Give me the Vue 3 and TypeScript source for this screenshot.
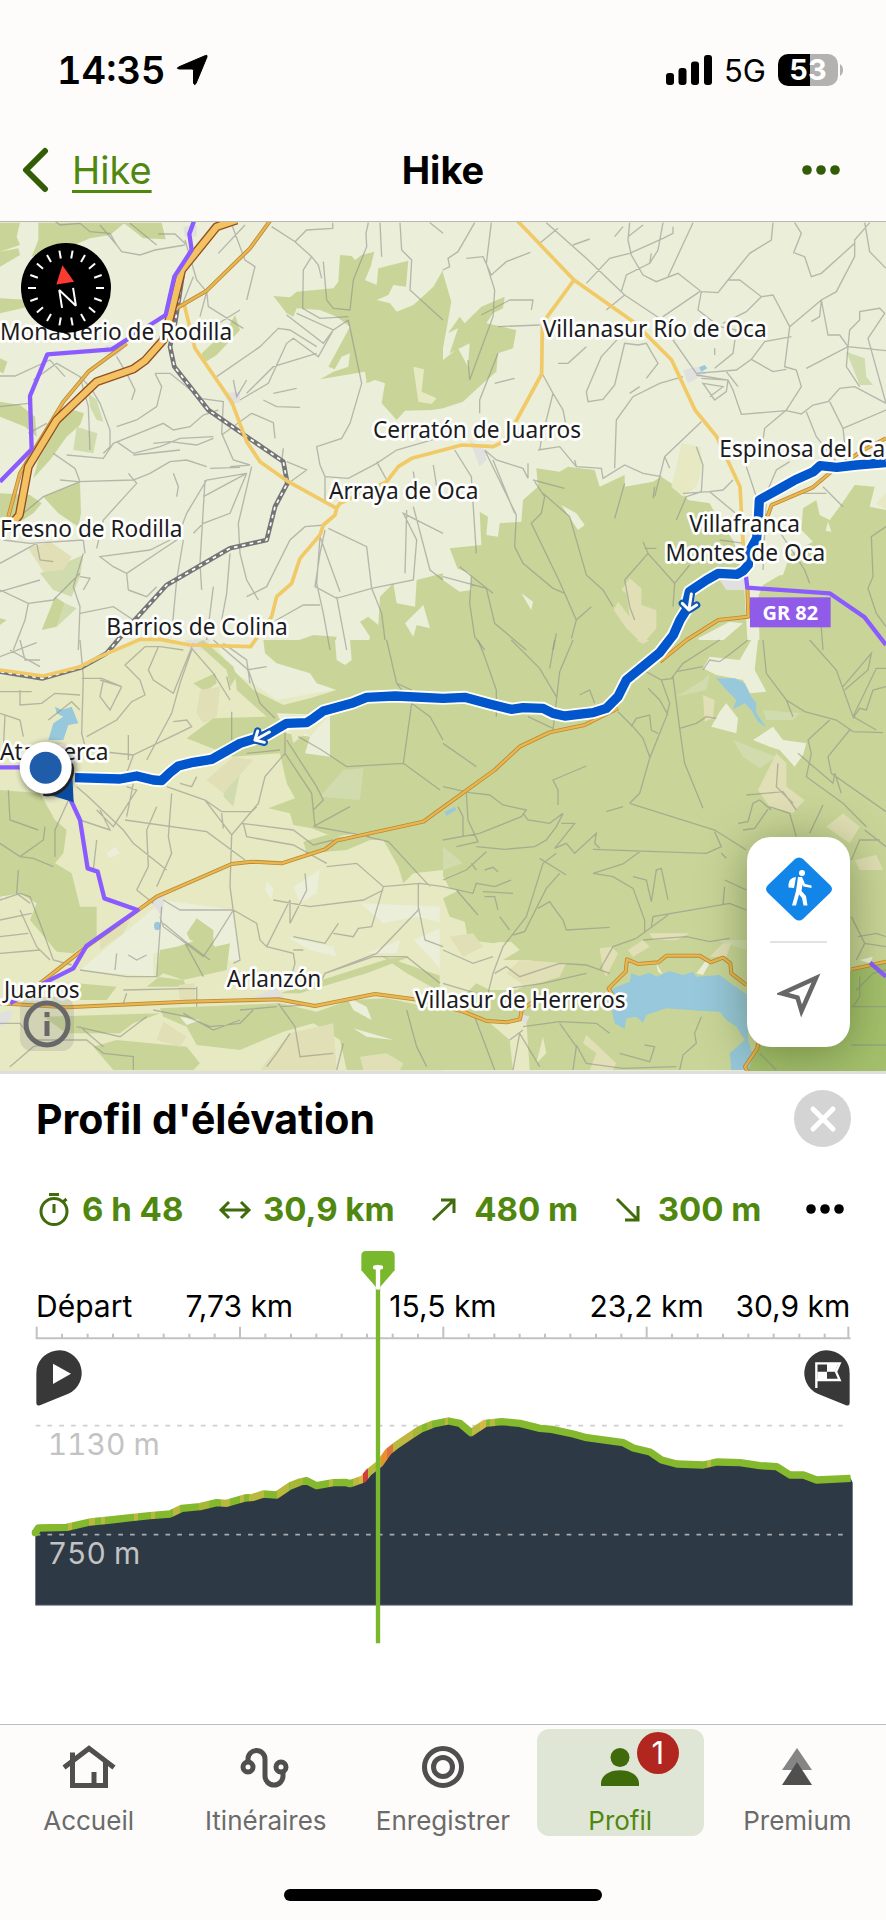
<script setup lang="ts">
import { ref } from 'vue'

interface Tile {
  x: number
  y: number
  light?: string
  cream?: string
  wood: string
  softWood?: string
  clearing?: string
  sand?: string
  urban?: string
  water?: string
  tracks: string
}

const tiles: Tile[] = [
  {
    x: 0,
    y: 0,
    wood:
      'M0 8H60L50 50 60 75 0 95Z M115 8H375L330 45 270 55 235 70 195 90 150 85 95 110 115 60Z M370 8H485L497 58 430 55Z M0 95L55 85 60 105 0 140Z M0 235L90 240 80 262 0 280Z M0 415L22 425 10 460 0 455Z M0 545L60 555 105 590 110 650 75 620 0 590Z M190 560L252 580 240 615 200 650 150 720 100 775 115 720 170 620Z M130 830L240 785 243 880 235 920 175 880Z M0 820L90 825 125 850 100 880 60 905 0 900Z M165 1130L195 1150 170 1220 125 1230Z M705 285L720 330 650 405 610 430 605 400 680 330Z M820 228L870 232 890 215 1000 205 1015 185 1020 105 1055 108 1065 120 1085 105 1123 95 1112 140 1095 180 1130 195 1135 145 1225 122 1218 200 1180 195 1165 225 1130 240 1170 250 1190 275 1240 255 1300 200 1329 150V565L1295 570 1215 572 1190 600 1145 550 1155 490 1125 480 1100 490 1095 455 960 478 1010 450 985 440 1050 320 1010 290 960 270 890 265 880 290 860 280Z M1080 1205L1105 1190 1135 1215 1140 1130 1180 1090 1190 1150 1245 1160 1250 1080 1329 1060V1290H1100L1110 1250Z M870 1270L940 1245 1010 1250 1000 1290H870Z M0 1195L20 1200 0 1215Z',
    softWood:
      'M230 620L292 640 280 700 220 690Z M265 520L290 540 310 605 290 600 270 560Z M120 1060L250 1005 240 1070 215 1130 160 1110Z M195 1150L230 1165 170 1220Z',
    clearing: 'M1215 1210L1270 1155 1290 1225 1250 1215 1240 1250Z M1025 410L1050 400 1045 440 1000 455Z M350 270L400 240 430 100 445 200 440 290 380 320Z',
    cream: 'M1240 440L1272 448 1265 515 1310 535 1295 552 1255 545Z',
    sand: 'M85 985L150 965 215 1010 190 1050 130 1055Z',
    urban: 'M670 520L720 515 720 545 690 555Z M320 375L375 380 350 410 310 400Z M555 1260L630 1258 620 1290H570Z M550 20L590 15 590 50 555 50Z',
    tracks:
      'M160 0L180 15 240 10 270 35 330 40 350 75 365 95 420 105 465 90 555 75 M300 15L350 75 M475 42H525L560 75 M390 10L470 75 M690 0L705 40 720 80 735 120 765 140 740 240 M655 100L735 15 M815 20L885 65 935 110 955 135 965 175 M885 65L920 30 998 25V8 M935 110L910 150 908 265 960 295 1045 290 M970 125L980 240 1000 265 1050 270 1060 180 1100 80 1098 40 1105 8 M1045 300L1085 490 1050 610 1025 655 950 680 960 735 975 770 1045 775 1130 730 1190 690 1329 650 M1140 8L1145 110 M1200 8L1205 90 1235 120 1230 210 1329 300 M1290 8L1329 40 M555 60L590 180 620 215 625 260 730 325 M580 170L550 245 M620 215L600 290 M590 330L640 320 720 270 M650 470L780 380 835 325 870 330 950 380 M950 400L820 440 740 520 M860 285L970 370 1000 330 890 280 M720 540L805 490 860 370 880 355 955 410 1000 330 1045 300 M790 540L830 560 900 562 M820 520L890 505 M755 580L820 608 825 655 M755 580L665 645 M700 480L710 530 740 480 M0 468H45L150 420 195 470 M100 480L170 430 240 470 270 500 M270 500L300 550 330 630V680L310 700 M240 470L265 560 270 690 M350 410L385 470 405 510 395 540 M465 460H510L560 500 600 535 670 545 665 640 700 720 750 735 690 740 M465 460L485 500 470 560 410 600 350 620 M0 560L85 550 M110 490L130 430 M140 610L85 640 M415 640L490 610 520 630 570 620 610 585 655 570 M415 640L340 670 310 715 200 705 M350 665L400 700 480 680 540 655 640 650 M460 670L510 665 590 675 640 655 M400 705L540 690 M620 740L560 720 510 725 450 760 400 780 235 785 M630 745L720 742 M385 760L410 790 310 900 290 985 M240 785L130 830 70 880 M180 780L235 785 M160 700L225 745 240 785 M520 760L535 800 530 830 M610 830L740 760 620 780 560 880 530 960 485 990 380 1060 M740 760L690 880 610 910 580 940 M755 740L715 910 720 1000 740 1080 775 1140 M615 780L600 1030 605 1110 M690 1000L680 1120 665 1200 M740 1130L800 1100 870 960 915 920 975 915 M550 960L530 1080 515 1240 M510 960L450 990 300 1010 340 1040 380 1060 385 1110 M640 1100L620 1260 M10 960L90 970 250 960 255 1000 M0 1030L110 970 120 1020 160 1025 M250 1000L220 1100 240 1160 235 1290 M0 1115L120 1080 M0 1110L85 1150 75 1200 40 1290 M85 1150L160 1140 240 1060 M240 1180L340 1160 400 1200 M240 1070L270 1075 250 1110 M385 1110L440 1130 470 1100 M860 725L920 750 865 790 M850 685L845 725 M960 950L1020 1115 M975 930L960 1000 945 1100 1010 1135 1115 1105 1240 1080 1250 960 1210 880 1329 940 M985 925L1100 980 1115 1105 1145 1180 1155 1260 M960 950L950 1090 970 1180 990 1290 M1220 870L1215 1060 M1240 860L1290 1050 1329 1080 M1130 725L1160 780 M975 770V850 M1240 755L1250 820 M1300 735L1310 800 M770 1250L830 1200 910 1155 960 1155 M1010 1130L1040 1290'
  },
  {
    x: 1329,
    y: 0,
    wood:
      'M0 160L25 245 10 330 0 385Z M185 230L180 265 150 280 130 310 220 330 210 385 165 400 160 455 120 490 60 545 0 565V420L45 385 75 440 80 370 20 400 45 325 15 340 50 290 65 310 115 260Z M280 745L350 755 375 740 455 750 470 800 545 765 545 800 630 785 655 770 715 810 735 840 800 850 830 905 870 960 915 1075 920 1190 960 1095 1020 1060 1045 1000 1110 965 1075 930 1080 865 1120 840 1130 885 1160 900 1190 860 1235 795 1295 800 1280 860 1329 870V1290H0V1030L80 1110 85 1070 45 1050 20 985 115 975 110 875 135 890 130 945 165 950 170 910 235 905 240 840 285 800Z',
    softWood: 'M1210 395L1265 415 1270 470 1290 495 1250 495Z',
    clearing:
      'M355 855L400 880 425 915 405 930Z M235 1120L270 1145 265 1170Z M765 1255L860 1205 900 1210 830 1270 780 1275Z M900 1040L945 1050 950 1290 915 1290Z M1155 905L1165 935 1148 932Z M940 1050L1010 1020 1030 1035 1020 1065 950 1070Z M0 1030L80 1060 85 1110 50 1115 0 1080Z',
    cream: 'M715 670L770 680 780 735 760 800 720 830 685 800 700 740Z M1300 850L1329 820V870Z',
    sand: 'M560 1075L595 1105 595 1155 640 1170 640 1225 600 1272 550 1225 512 1170 525 1145 560 1190 550 1120 535 1110Z',
    urban: 'M720 450L765 440 790 460 735 490Z M80 660L125 690 130 720 110 740Z M830 1080L905 1070 915 1110 850 1110Z',
    water: 'M768 442L785 435 793 445 775 455Z',
    tracks:
      'M95 8L45 95 15 115 20 140 0 150 M145 8L130 130 155 210 150 290 80 480 75 420 M70 115L120 110 145 165 190 125 262 97 M345 25L290 70 M310 8L430 115 545 225 680 315 M390 75L440 57 M430 190L500 115 560 100 660 55 690 40 V20 M555 60L565 105 600 165 640 185 705 160 775 215 825 218 855 180 920 100 985 60 990 8 M555 60L560 8 M515 50L540 20 M555 50L600 15 M625 100L620 130 550 165 535 215 M675 170L750 8 M660 8L645 90 620 130 M545 225L490 270 M775 215L765 270 830 320 880 330 M660 290L770 215 M855 180H890L955 230 990 225 1040 320 1025 440 1060 450 1075 500 1030 570 965 625 960 660 M840 310L910 275 955 230 M1055 8L1075 40 1052 98 1085 110 1105 170 1135 160 1235 70 M1040 320L1135 240 1180 215 1235 110V60L1280 8 M1135 240L1155 345H1190L1215 380 1329 392 M1135 240L1130 290 1105 305 M1265 8L1280 95 1329 145 M1215 380L1220 330 1250 300V275L1310 265 1325 280 1275 355 1329 550 M1090 445L1215 380 1210 440 1250 500 M430 515L475 410 540 340 M430 515L435 545 480 538 515 495 545 370 585 375 610 370 645 430 610 475 M345 430H375L430 380 M200 240H270L265 270 M115 285L200 240 M165 320L290 315 M155 490L215 475 M165 400L110 540V580 M300 465L330 520 295 660 290 690 M330 520L360 570 370 620 M560 520L590 500 M720 470L650 490 570 530 520 600 515 745 M690 360L760 460 880 450 925 418 965 365 1045 350 M925 418L990 455 1030 448 M815 445L870 400 880 330 M850 455L885 500 M815 385V405 M775 475L855 480 850 515 815 540 780 490 840 500 800 530 M760 465L855 480 870 510 895 583 1030 572 1075 582 1110 555 1155 545 1190 505 1235 500 1329 550 M285 690L350 680 400 740 475 745 480 775 545 735 600 760 655 770 M395 720L400 740 M125 690L160 720 240 745 255 775V730 M35 690L85 770 100 1000 M125 690L220 885 215 980 240 1030 330 1105 365 1120 400 1200 M150 720L215 880 M270 780L365 805 M275 785L305 830 295 880 265 910 345 1075 M300 820L380 890 430 1065 480 1110 510 1160 M545 790L515 895 M635 800L630 835 M665 710L635 830 M775 605L665 710 680 745 M760 680L780 735 775 815 730 830 700 900 M800 815L840 810 870 780 M720 820L800 815 890 890 M910 740L950 860 M960 1050L970 820 1000 750 1040 725 M1140 800L1200 860 M1070 820H1150 M600 965L615 1000 545 1080 M605 985H640 M615 1000L695 1090 690 1160 M695 1090L740 1035 M545 1080L560 1160 575 1200 M0 1070L130 1105 155 1210 250 1290 M50 1040L150 1120 M85 1070L80 1150 95 1250 125 1290 M345 1075L400 1200 385 1255 M445 1160L400 1200 M340 1240L330 1290 M1329 920L1285 950 1290 1070 1275 1105 1300 1180 1329 1220 M1000 920L1085 1050 1100 1090 M1130 1160L1140 1290 M830 960L905 970 M1090 575L1120 650 1200 750 M1160 545L1200 625 1205 670 M1200 625L1329 570'
  },
  {
    x: 0,
    y: 1260,
    light:
      'M0 0H420L300 60 130 110 0 90Z M640 0H760L820 30 930 100 1000 150 830 180 760 130 700 100Z M320 640L345 620 360 640 330 655Z M360 890L490 780 700 810 722 960 640 965 600 930 460 940 460 1010 240 990 300 940Z M800 725L820 745 815 780 795 750Z M880 740L960 690 950 760 900 790Z M1080 790L1329 800V850L1250 830 1150 850Z M860 890L1000 920 1010 950 930 930Z M1240 900L1329 860V1000L1290 950Z M1100 940L1200 900 1190 940Z M0 745L25 660 30 720 10 790Z',
    wood:
      'M790 0H1329V510L1270 545 1110 575 1000 590 935 565 880 555 870 520 805 505 885 475 860 430 840 340 700 350 560 295 640 235 800 230 710 150 705 95 760 150 850 195 930 175 1010 150 950 130 930 100 830 70 795 40Z M580 130L645 100 650 130 615 155Z M590 10L610 0 700 80 710 110 690 140 680 90Z M0 450L120 460 165 540 200 570 190 640 165 670 215 700 240 800 290 800 290 890 220 940 170 935 90 840 110 790 60 760 0 770Z M480 930L530 920 620 890 645 920 690 910 680 990 550 1020 470 1010Z M560 880L590 835 640 870 640 920 570 900Z M910 605L980 585 1110 600 1040 630 920 640Z M1010 600L1200 545 1329 500V690L1240 700 1210 730 1195 680 1150 600Z M480 1105L840 1090 950 1115 1050 1080 1160 1075 1329 1110V1290H1040L1020 1200 940 1150 850 1175 720 1230 590 1215 560 1160 490 1130Z M840 1060L1170 955 1230 950 1100 1000 1000 1030 900 1060Z M130 1130L480 1120 400 1150 360 1180 200 1180Z M280 1220L350 1200 560 1220 600 1270 580 1290H340Z M490 1000L440 1040 560 1040 550 1020Z M230 1030L350 1040 320 1080 240 1080Z M1140 945L1329 1010V1060L1220 1000Z',
    softWood: 'M1030 390L1090 385 1080 480 960 470Z M680 420L720 400 700 500 670 470Z',
    clearing: 'M830 220L990 225 990 350 915 340 930 290 860 280Z M1005 0H1050L1055 60 1035 75 1010 60Z M1040 1070L1100 1100 1115 1140 1060 1110Z M1060 1165L1180 1200 1100 1190Z M540 1130L600 1140 560 1155Z',
    cream: 'M860 225L985 228 930 290 915 280 880 310Z M0 860H60L130 960 0 1010Z',
    sand: 'M600 150L660 140 650 230 610 250 590 220Z M620 420L700 350 760 360 670 460Z M535 1035L585 1030V1080H540Z M870 1180L1000 1150 1010 1290 780 1290 820 1240Z M1080 1250L1160 1240 1210 1270 1200 1290H1090Z M490 1145L560 1190 540 1220 470 1200Z M300 890L390 840 370 880 300 930Z',
    urban: 'M450 780L495 765 485 830Z M760 1070L830 1045 860 1085 780 1085Z M0 1120L40 1110 30 1140 0 1160Z',
    water: 'M165 200L185 210 215 200 235 250 205 255 190 300 145 300 160 250 190 230 170 220Z M462 858A9 12 0 1 0 481 858 9 12 0 1 0 462 858Z',
    tracks:
      'M0 50L110 8 M30 30L120 80 M60 0L75 60H120 M240 0L250 110 245 280 258 330 M0 155H95 M60 150V195L125 190 165 160 240 165 M15 225L10 330 M0 220L60 240 70 290 M245 115H305L365 140 300 120 M365 140L330 210 300 170 310 120 M435 20L375 75 420 120 435 165 395 185 350 240 260 290 M475 20L445 90 460 120 520 160 580 10 M435 20H480L550 30 M575 30L540 130 515 220 440 360 M520 245L560 240 575 260 400 345 380 400 M400 345L260 330 M385 285V360 M640 0L745 90 780 190 825 235 M575 25L640 100 690 180 M670 10L740 60 750 130 M680 110L690 150 M695 215V300 M740 90L800 80 M145 240L215 185 240 210 M500 440L615 480 695 585 775 490 795 410 855 340V280 M695 585L690 740 720 960 700 970 M740 340L840 330 M230 440L265 470 370 570 400 610 500 690 M290 510L340 560 410 450 380 440 M300 510L330 570 240 540 M375 540L620 575 735 660 M470 500L440 570 445 680 410 750 M515 460L505 590 515 640 470 740 M400 430L380 530 M615 480L665 515 755 515 770 500 M665 520L670 565 M540 430L575 440 590 410 M725 550L880 570 940 615 1000 600 M730 550L740 590 880 615 980 670 M855 340L935 460 945 560 1110 590 M1040 380L1210 370 1235 190 M1210 370L1320 450 M895 290L965 330 1040 380 M1100 590L1165 605 1290 740 M860 300L950 440 970 480 940 510 M940 560L1050 500 M980 680L1070 670 1150 740 1260 730 1329 740 M915 700L920 750 870 850V780 M820 780L930 800 1090 780 1150 750 M700 810L770 850 780 900 800 920 870 780 M800 920L880 940 885 970 865 1040 M880 930L910 930 M880 890L975 910 1015 850 M1000 880L1060 890 1075 865 1115 860 1150 740 M1255 730V810L1130 940 975 1000 960 1030 M1255 800L1275 900 1329 920 M975 1000L1120 950 1220 950 1320 1030 M1160 0L1190 130 1235 150 M1190 130L1235 190 1290 230 1329 300 M0 610L60 650 100 655 160 680 M60 650L130 600 135 560 M55 690L50 760 90 790 M25 450L30 540 115 570 M165 650V570L210 470 M0 780L60 760 90 770 120 850 160 960 215 975 M60 810L110 920 150 960 M0 840L95 820 M0 890L85 880 M0 940L120 930 M240 990L380 1010 470 1010 485 800 M490 780L540 810 700 810 M480 830L490 860 610 950 650 890 700 810 M550 900L630 960 M490 850L550 900 610 1010 M385 945L410 960 440 945 M350 940L345 990 M370 1050L590 1045 M380 1060L370 1090 M590 1040V1100 M720 1110L830 1100 M835 1090L885 1160 900 1250 1000 1240 M840 1100L1000 1090 M870 1180L830 1240 800 1280 M1030 1210L1010 1290 M1220 1110L1250 1220 1280 1280 M460 1110L560 1130 630 1160 720 1150 760 1110 M230 1160L360 1190 440 1130 M0 1150H60L100 1200 260 1200 310 1240 400 1250V1290 M30 1280L100 1220 150 1210 M240 1160L310 1220 M550 1120L640 1170 720 1140 M290 600L280 690 M410 750L460 790'
  },
  {
    x: 1329,
    y: 1260,
    wood: 'M0 0H1329V1290H0Z',
    softWood: 'M700 170L780 120 800 100 790 150Z M0 620L60 670 0 690Z M870 300L1000 350 950 385 900 350Z M960 210L1070 220 1050 240 970 240Z M820 900H910V930Z',
    clearing:
      'M780 85L800 50 890 60 925 0 945 0 935 90 970 155 920 160 900 120 820 105Z M850 190L885 235 880 280 805 260 830 215Z M930 300L990 260 1020 300 1090 310 1080 345 1055 380 1010 330 980 320Z M150 910L180 905 175 960 140 990 M760 1000L790 960 800 970 780 1005Z M640 970L660 1005 645 995Z M1250 960L1290 950 1280 970Z',
    cream: 'M-10 690L20 745 45 752 0 775 20 830 65 845 75 900 150 910 205 905 230 930 180 960 250 960 330 970 300 1010 220 1050 140 1050 100 1030 40 1090 -10 1100Z M130 1140H250L260 1290H210L200 1200Z M300 1190L310 1240 280 1270Z',
    sand:
      'M230 960L370 970 350 1010 250 1040 190 1000Z M470 925L505 920 525 940 490 1010 480 990Z M780 165L815 180 810 235 785 245Z M1000 340L1030 370 1030 440 1085 480 1050 520 980 500 945 450Z M1150 560L1200 520 1250 560 1220 610Z M1235 660L1300 645 1320 690 1250 690Z M430 1185L520 1270 510 1290H440L460 1240 420 1210Z M555 930L600 900 620 920 570 950Z M620 880L740 880 700 900 630 900Z M800 950L840 910 865 910 850 950Z M20 890L90 880 120 920 60 950Z M580 0H620L600 12Z',
    urban: 'M225 1120L260 1130 245 1155Z',
    water:
      'M565 1000L590 1008 620 998 640 1010 680 993 720 1005 750 995 760 1010 830 1005 870 1035 915 1065V1200L945 1290H865L860 1240 905 1200 880 1160 850 1140 830 1115 770 1112 670 1105 610 1125 600 1148 580 1130 550 1135 545 1167 515 1150 500 1080 510 1045 560 1025Z M820 115L875 115 905 130 925 170 940 190 940 220 970 262 945 245 925 210 905 190 870 208 880 180 850 150Z M5 515L35 500 40 510 10 527Z',
    tracks:
      'M105 0L125 50 160 150V230 M205 0L290 85 340 170 M335 0L320 85 M390 0L350 95 330 270 M410 165L440 150 455 190 M255 230L330 265 M525 215L570 260 600 295 620 350 M565 260L580 235 620 225 625 270 645 280 M615 145L650 180 675 225 M600 90L655 120 690 115 M655 120L680 190 670 230 620 355 590 460 560 490 M690 110L710 265 725 370 780 505 M710 265L760 250 790 230 820 235 M830 0L720 70 685 115 M700 95L780 80 M780 90L800 60 830 65 870 35 915 0 M560 490L815 570 910 630 M815 575L835 620 790 640 450 628 M540 500L490 515 M835 640L850 655 M0 310L100 380 M430 378L330 420 345 450V495 M0 440L80 458 140 465 180 495 250 510 235 530 110 580 0 600 M70 460L75 540 105 605 40 620 M45 500L60 530V590 M240 520L255 540 320 550 360 520 340 560 310 600 275 620 185 628 100 620 M355 550H395L335 625 370 610 395 640 460 580 455 610 470 625 M0 720L70 690 130 635 M85 670L100 690 M125 690L150 682 165 695 M0 740L90 760 100 730 155 740 205 720 M40 750L105 825 M125 770H155L165 810 M170 830L200 870 M120 755L210 760 M290 655L370 705 M340 640L300 670 250 830 180 920 150 1000 135 1060 M350 700L310 745 245 875 210 885 M285 805L320 785 330 800 360 840 370 870 500 862 M450 700L540 672 590 635 M450 700L510 710 570 745 605 840V880 M570 710L610 720 625 785 640 690 655 685 675 780 M625 860L630 830 860 790 910 810 M845 740L840 795 M845 720L910 750 M580 895L675 825 M580 895L510 920 470 990 M600 900L730 890 M730 890L800 905 860 895 M960 0L970 100 1030 180 1085 215 1180 240 1230 275 1320 278 M1030 180L1050 230 M1100 0L1180 90 1230 230 1300 270 M1200 140L1285 40 1275 90 1205 150 M1230 230L1300 85H1329 M1230 235L1250 205 1270 210 1290 150 1329 140 M1220 270L1155 350 1165 400 1329 515 M1160 240L1095 300 1105 340 1090 410 1200 490 1270 560 M1065 340L1170 430 1175 400 1195 460 M910 465L1020 455 1060 510 M1005 370L1000 440 1050 490 M900 570L935 565 980 500 1040 520 1060 590 M885 550L915 545 930 490 950 480 985 510 M1100 580L1140 495 M1225 660L1250 600 1310 600 M1265 570L1329 620 M1225 830L1265 910 1329 920 M1265 910L1240 960 M1245 890L1300 880 1329 890 M1250 1010V1070L1230 1100 M1240 1050L1290 1000 1329 990 M1225 1100H1329 M1225 1215H1329 M950 1240L1000 1290 M0 930L90 970 150 950 M155 1000L190 980 230 1010 350 970 430 975 500 1000 M195 1045L300 1030 430 1000 M0 1030L100 1060 M95 1130L155 1290 M240 1160L350 1145 460 1150 500 1180 M240 1170L200 1200 M230 1180L210 1290 M230 1180L290 1280 M350 1150L400 1220 390 1290 M400 1215L430 1270 540 1285 700 1280 M530 1240L620 1265 635 1220 605 1215 M710 1290L720 1245 760 1210 755 1180 775 1130'
  }
]

interface Place {
  name: string
  x: number
  y: number
  anchor?: 'start' | 'middle'
}

const places: Place[] = [
  { name: 'Monasterio de Rodilla', x: 0, y: 360 },
  { name: 'Fresno de Rodilla', x: 0, y: 950 },
  { name: 'Barrios de Colina', x: 591, y: 1246, anchor: 'middle' },
  { name: 'Cerratón de Juarros', x: 1431, y: 655, anchor: 'middle' },
  { name: 'Arraya de Oca', x: 1211, y: 837, anchor: 'middle' },
  { name: 'Villanasur Río de Oca', x: 1964, y: 352, anchor: 'middle' },
  { name: 'Espinosa del Ca', x: 2158, y: 711 },
  { name: 'Villafranca', x: 2234, y: 936, anchor: 'middle' },
  { name: 'Montes de Oca', x: 2236, y: 1022, anchor: 'middle' },
  { name: 'Atapuerca', x: 0, y: 1620 },
  { name: 'Juarros', x: 12, y: 2334 },
  { name: 'Arlanzón', x: 822, y: 2302, anchor: 'middle' },
  { name: 'Villasur de Herreros', x: 1561, y: 2365, anchor: 'middle' }
]

const motorway = 'M710 0L650 20 545 150 510 290 490 360 435 422 400 447 290 485 170 600 85 740 58 885 20 930'
const localRoads =
  'M553 255L585 385 695 545 740 665 780 725 865 785 1010 865 1005 885 970 915 960 945 900 1015 875 1090 830 1130 815 1190 752 1280 570 1275 480 1258 420 1258 300 1310 240 1340 130 1368 0 1350 M1010 865L1020 850 1160 785 1195 740 1235 715 1329 690 1385 675 1480 680 1510 665 1550 600 1625 462 1627 310 1722 180 M1550 0L1722 180 1900 305 2015 420 2085 570 2150 650 2220 800 2230 980 2240 1060'
const mainRoads =
  'M812 0L750 85 620 212 530 265 M380 370L265 455 190 545 60 760 25 890 M2658 655L2590 690 2500 750 2437 803 2315 855 2295 910 M2242 1100L2245 1190 2155 1200 2060 1260 1980 1325 M1854 1465L1754 1515 1649 1537 1559 1580 1484 1650 1329 1762 1270 1805 1010 1862 975 1888 845 1930 755 1925 695 1932 585 1980 470 2030 415 2070 260 2180 120 2290 M0 2350L200 2362 560 2345 835 2338 945 2358 1125 2322 1260 2340 1390 2375 1460 2403 1520 2407 1560 2398 1565 2370 1620 2330 M1840 2330L1826 2305 1877 2255 1881 2218 1914 2232 1975 2227 1999 2207 2099 2207 2132 2227 2169 2213 2191 2230 2194 2260 2239 2295 M2658 2225L2554 2248 M2274 2470L2272 2485 2235 2540 2245 2560'
const railway =
  'M548 165L525 310 510 380 523 440 625 570 740 650 850 725 862 790 825 860 800 960 690 985 500 1095 400 1205 320 1300 245 1342 128 1375 0 1355'
const trails =
  'M583 0L568 42 575 90 523 170 497 285 335 388 142 403 90 528 95 688 0 785 M2238 1070L2242 1103 2489 1120 2594 1192 2658 1275 M2610 2228L2658 2270 M0 1642H100 M210 1735L240 1800 263 1945 293 1955 313 2035 413 2070 260 2177 220 2245 130 2290 30 2350'
const route =
  'M2658 728L2570 735 2510 742 2460 737 2440 755 2385 780 2350 800 2278 840 2275 900 2270 955 2245 1000 2245 1035 2230 1052 2212 1063 2155 1060 2120 1080 2068 1115 2062 1140 2065 1160 2040 1200 2020 1245 1979 1298 1879 1380 1854 1430 1819 1465 1779 1478 1694 1488 1659 1480 1629 1465 1569 1463 1534 1468 1469 1452 1394 1432 1329 1435 1185 1428 1100 1432 1055 1450 970 1473 940 1495 920 1508 860 1510 800 1545 720 1570 635 1618 580 1627 535 1638 510 1658 485 1682 460 1680 410 1668 360 1677 225 1673'

const ridge =
  'L115 384 200 382 270 366 330 360 400 352 450 347 510 342 545 325 600 320 650 308 680 310 735 294 760 292 790 282 830 285 870 258 900 246 920 242 950 257 1000 248 1035 247 1050 251 1090 237 1105 218 1140 190 1165 155 1190 135 1230 108 1260 88 1300 72 1345 63 1380 70 1413 98 1455 70 1505 65 1560 70 1620 85 1655 88 1720 102 1760 113 1870 128 1900 144 1950 156 1985 180 2030 192 2110 195 2150 186 2220 188 2280 197 2330 200 2370 225 2410 225 2450 240 2552 235'

const GREEN = '#84b82d'
const OLIVE = '#b9b93f'
const steepness: [number, number, string][] = [
  [203, 216, OLIVE],
  [268, 284, OLIVE],
  [303, 314, OLIVE],
  [403, 414, OLIVE],
  [453, 464, OLIVE],
  [518, 540, OLIVE],
  [598, 628, '#a6b836'],
  [664, 690, OLIVE],
  [720, 732, OLIVE],
  [748, 792, OLIVE],
  [832, 868, OLIVE],
  [870, 908, '#a6b836'],
  [988, 1000, OLIVE],
  [1060, 1078, OLIVE],
  [1078, 1090, '#d6b845'],
  [1090, 1104, '#d23f3a'],
  [1104, 1142, OLIVE],
  [1142, 1160, '#e8902c'],
  [1160, 1180, '#dd7440'],
  [1180, 1210, OLIVE],
  [1210, 1240, '#c4b444'],
  [1240, 1265, '#a6b836'],
  [1280, 1296, '#a6b836'],
  [1334, 1344, OLIVE],
  [1415, 1440, OLIVE],
  [1440, 1458, '#d6b845'],
  [1470, 1484, OLIVE],
  [2120, 2134, OLIVE]
]
const ridgeStops = steepness.flatMap(([from, to, color]) => [
  { at: from / 2658, color: GREEN },
  { at: from / 2658, color },
  { at: to / 2658, color },
  { at: to / 2658, color: GREEN }
])

const ticks = Array.from({ length: 33 }, (_, i) => ({
  x: i === 32 ? 2545 : 110 + Math.round(i * 76.25),
  major: i % 8 === 0
}))
const distances = [
  { label: 'Départ', x: 108, anchor: 'start' },
  { label: '7,73 km', x: 718, anchor: 'middle' },
  { label: '15,5 km', x: 1329, anchor: 'middle' },
  { label: '23,2 km', x: 1940, anchor: 'middle' },
  { label: '30,9 km', x: 2551, anchor: 'end' }
]

const tabs = [
  { id: 'home', label: 'Accueil' },
  { id: 'routes', label: 'Itinéraires' },
  { id: 'record', label: 'Enregistrer' },
  { id: 'profile', label: 'Profil' },
  { id: 'premium', label: 'Premium' }
]
const activeTab = ref('profile')
const compassMarks = Array.from({ length: 18 }, (_, i) => i * 20 - 10)
</script>

<template>
  <div class="screen">
    <div class="status">
      <div class="status-left">
        <span class="clock">14:35</span>
        <svg width="32" height="32" viewBox="0 0 32 32" aria-hidden="true">
          <path d="M29.500 1.500Q31.500 0.500 31 3L20 29.500Q18.500 32 17.500 29V16.500Q17.500 15 16 15H3Q0 14.500 2.500 13Z" fill="#000" stroke="#000" />
        </svg>
      </div>
      <div class="status-right">
        <svg width="46" height="30" viewBox="0 0 46 30" aria-hidden="true">
          <rect x="0" y="18" width="8" height="12" rx="3" />
          <rect x="12.500" y="13" width="8" height="17" rx="3" />
          <rect x="25" y="6.500" width="8" height="23.500" rx="3" />
          <rect x="38" y="0" width="8" height="30" rx="3" />
        </svg>
        <span class="network">5G</span>
        <div class="battery-wrap">
          <div class="battery"><span>53</span></div>
          <svg width="5" height="12" viewBox="0 0 5 12" aria-hidden="true"><path d="M1 0Q4 2 4 6T1 12Z" fill="#b3b2b0" /></svg>
        </div>
      </div>
    </div>

    <header class="bar">
      <a class="back" href="#">
        <svg width="28" height="48" viewBox="0 0 28 48" fill="none" aria-hidden="true">
          <path d="M23 5L4 24 23 43" stroke="#335c06" stroke-width="6" stroke-linecap="round" stroke-linejoin="round" />
        </svg>
        <span>Hike</span>
      </a>
      <h1>Hike</h1>
      <button class="more" type="button" aria-label="Plus d'options">
        <svg width="38" height="10" viewBox="0 0 38 10" fill="#335c06"><circle cx="5" cy="5" r="4.800" /><circle cx="19" cy="5" r="4.800" /><circle cx="33" cy="5" r="4.800" /></svg>
      </button>
    </header>

    <section class="map" aria-label="Carte">
      <svg class="canvas" viewBox="0 6 2658 2547" aria-hidden="true">
        <rect width="2658" height="2560" fill="#ebeed9" />
        <path d="M0 1368L130 1368 300 1310 420 1255 570 1275 752 1280 1329 1400V2560H0Z" fill="#e6e9c2" />
        <g v-for="(t, i) in tiles" :key="i" :transform="`translate(${t.x} ${t.y})`">
          <path v-if="t.light" :d="t.light" fill="#ebeed9" />
          <path :d="t.wood" fill="#c9d598" />
          <path v-if="t.softWood" :d="t.softWood" fill="#d1dcae" />
          <path v-if="t.clearing" :d="t.clearing" fill="#ebeed9" />
          <path v-if="t.cream" :d="t.cream" fill="#e6e9c2" />
          <path v-if="t.sand" :d="t.sand" fill="#e1dfb5" />
          <path v-if="t.urban" :d="t.urban" fill="#e0e0df" />
          <path v-if="t.water" :d="t.water" fill="#97c8db" />
        </g>
        <path d="M2274 2480L2400 2290 2554 2252 2658 2228V2560H2240Z" fill="#a4c06c" />
        <g fill="none" stroke="#8f8f8a" stroke-opacity=".58" stroke-width="4">
          <path v-for="(t, i) in tiles" :key="i" :d="t.tracks" :transform="`translate(${t.x} ${t.y})`" />
        </g>
        <g fill="none" stroke-linejoin="round">
          <path :d="railway" stroke="#757575" stroke-width="14" />
          <path :d="railway" stroke="#fff" stroke-width="5" stroke-dasharray="11 13" />
          <path :d="localRoads" stroke="#f1c966" stroke-width="11" />
          <path :d="mainRoads" stroke="#b98a38" stroke-width="12" />
          <path :d="mainRoads" stroke="#eab64d" stroke-width="7" />
          <path :d="motorway" stroke="#934e22" stroke-width="27" />
          <path :d="motorway" stroke="#f3c263" stroke-width="19" />
          <path :d="trails" stroke="#8a5cff" stroke-width="13" />
          <path :d="route" stroke="#fff" stroke-width="39" />
          <path :d="route" stroke="#0156cb" stroke-width="28" />
        </g>
        <g fill="none" stroke-linecap="round" stroke-linejoin="round">
          <g v-for="(pass, i) in [{ c: '#0f56b4', w: 22 }, { c: '#fff', w: 9 }]" :key="i" :stroke="pass.c" :stroke-width="pass.w">
            <path d="M2074 1122L2067 1168M2047 1150L2067 1170 2090 1155" />
            <path d="M808 1536L765 1560M773 1533L765 1560 793 1567" />
          </g>
        </g>
        <rect x="2250" y="1132" width="242" height="90" fill="#8f5be8" />
        <text class="ref" x="2371" y="1200" text-anchor="middle">GR 82</text>
        <g class="places">
          <text v-for="p in places" :key="p.name" :x="p.x" :y="p.y" :text-anchor="p.anchor ?? 'start'">{{ p.name }}</text>
        </g>
        <defs>
          <filter id="soft" x="-30%" y="-30%" width="160%" height="160%"><feGaussianBlur stdDeviation="9" /></filter>
        </defs>
        <circle cx="145" cy="1650" r="82" fill="#000" opacity=".5" filter="url(#soft)" />
        <path d="M215 1630L221 1747 140 1722Z" fill="#0a4b9f" />
        <path d="M214 1632Q226 1660 200 1695T130 1722" stroke="#222" stroke-width="10" fill="none" />
        <circle cx="137" cy="1643" r="78" fill="#fff" />
        <circle cx="137" cy="1643" r="48" fill="#1f5ca9" />
      </svg>

      <button class="compass" type="button" aria-label="Boussole">
        <svg viewBox="-45 -45 90 90" aria-hidden="true">
          <circle r="45" fill="#000" />
          <g transform="rotate(-9)">
            <path v-for="a in compassMarks" :key="a" d="M0 -38V-30" stroke="#fff" stroke-width="2" :transform="`rotate(${a + 9})`" />
            <path d="M0 -23L9 -5H-9Z" fill="#fb3b30" />
            <path d="M-7 19V1L7 19V1" fill="none" stroke="#fff" stroke-width="2" stroke-linejoin="bevel" />
          </g>
        </svg>
      </button>

      <button class="info" type="button" aria-label="Informations">
        <svg viewBox="0 0 54 54" fill="none" aria-hidden="true">
          <circle cx="27" cy="27" r="21" stroke="#686868" stroke-width="5" />
          <path d="M27 15V20M27 24V39" stroke="#686868" stroke-width="5" />
        </svg>
      </button>

      <div class="controls">
        <button type="button" aria-label="Type de carte">
          <svg width="68" height="64" viewBox="0 0 68 64" aria-hidden="true">
            <path d="M30 2Q34 -1 38 2L65 28Q69 32 65 36L38 62Q34 65 30 62L3 36Q-1 32 3 28Z" fill="#1286e8" />
            <g fill="#fff">
              <circle cx="37" cy="16" r="3" />
              <path d="M31 20Q24 21 23.500 27V30.500L29 31Z" />
              <path d="M33 20H37L40 27 46.500 28.500V31L38.500 29.500 37.500 27.500 36.500 34 41 39 42.500 48.500H38.500L37 41 34 37.500 31 48.500H27L31 34Z" />
            </g>
          </svg>
        </button>
        <hr />
        <button type="button" aria-label="Ma position">
          <svg width="44" height="44" viewBox="0 0 44 44" aria-hidden="true">
            <path d="M39 5L24.500 38 20.500 24.500 5 20.500Z" fill="none" stroke="#676767" stroke-width="4.500" />
          </svg>
        </button>
      </div>
    </section>

    <section class="panel">
      <div class="panel-head">
        <h2>Profil d'élévation</h2>
        <button class="close" type="button" aria-label="Fermer">
          <svg width="28" height="28" viewBox="0 0 28 28" aria-hidden="true"><path d="M4 4L24 24M24 4L4 24" stroke="#fff" stroke-width="5" stroke-linecap="round" /></svg>
        </button>
      </div>

      <div class="stats">
        <div class="stat">
          <svg width="34" height="36" viewBox="0 0 34 36" fill="none" stroke="#3f6b0b" aria-hidden="true">
            <circle cx="17" cy="20.500" r="13" stroke-width="3" />
            <path d="M12 3.500H22" stroke-width="3" /><path d="M17 13V22" stroke-width="3" /><path d="M25.500 11.500L29.500 8" stroke-width="3" />
          </svg>
          <span>6 h 48</span>
        </div>
        <div class="stat">
          <svg width="34" height="36" viewBox="0 0 34 36" fill="none" stroke="#3f6b0b" stroke-width="3" aria-hidden="true">
            <path d="M3 19H31M11 11L3 19 11 27M23 11L31 19 23 27" />
          </svg>
          <span>30,9 km</span>
        </div>
        <div class="stat">
          <svg width="34" height="36" viewBox="0 0 34 36" fill="none" stroke="#3f6b0b" stroke-width="3" aria-hidden="true">
            <path d="M4 29L25 9M12 9H25V22" />
          </svg>
          <span>480 m</span>
        </div>
        <div class="stat">
          <svg width="34" height="36" viewBox="0 0 34 36" fill="none" stroke="#3f6b0b" stroke-width="3" aria-hidden="true">
            <path d="M4 8L25 29M12 29H25V15" />
          </svg>
          <span>300 m</span>
        </div>
        <button class="more-stats" type="button" aria-label="Plus de statistiques">
          <svg width="38" height="10" viewBox="0 0 38 10"><circle cx="5" cy="5" r="4.800" /><circle cx="19" cy="5" r="4.800" /><circle cx="33" cy="5" r="4.800" /></svg>
        </button>
      </div>

      <svg class="chart" viewBox="0 0 2658 1200" role="img" aria-label="Profil d'élévation du parcours">
        <defs>
          <linearGradient id="steep" gradientUnits="userSpaceOnUse" x1="0" y1="0" x2="2658" y2="0">
            <stop v-for="(s, i) in ridgeStops" :key="i" :offset="s.at" :stop-color="s.color" />
          </linearGradient>
        </defs>
        <text v-for="d in distances" :key="d.label" class="distance" :x="d.x" y="215" :text-anchor="d.anchor">{{ d.label }}</text>
        <g stroke="#c2c2c2" stroke-width="6">
          <path d="M107 280H2552" />
          <path v-for="t in ticks" :key="t.x" :d="`M${t.x} ${t.major ? 245 : 266}V280`" />
        </g>
        <g fill="#383838">
          <path d="M109 386A68 68 0 1 1 205 446L120 481Q109 484 109 474Z" />
          <path d="M2549 386A68 68 0 1 0 2453 446L2538 481Q2549 484 2549 474Z" />
        </g>
        <path d="M159 356L213 386 159 417Z" fill="#fff" />
        <path d="M2449 429V355H2519L2508 380 2519 405H2449" fill="none" stroke="#fff" stroke-width="7" />
        <path d="M2481 355H2515L2505 380H2481ZM2452 380H2481V403H2452Z" fill="#fff" />
        <g transform="translate(0 465)">
          <path d="M107 77H2534" stroke="#cfcfcf" stroke-width="5" stroke-dasharray="14 21.400" />
          <path :d="`M106 616V398${ridge}L2558 248V616Z`" fill="#2e3946" />
          <path d="M106 616H2558" stroke="#8f949b" stroke-width="3" />
          <path d="M107 404H2534" stroke="#a9acae" stroke-width="5" stroke-dasharray="14 21.400" />
          <path :d="`M106 398${ridge}`" fill="none" stroke="url(#steep)" stroke-width="22" stroke-linejoin="round" />
          <circle cx="106" cy="398" r="11" :fill="GREEN" />
          <text class="altitude" x="143" y="165">1130 m</text>
          <text class="altitude" x="143" y="491">750 m</text>
        </g>
        <path d="M1134 100V1195" stroke="#79b72c" stroke-width="13" />
        <path d="M1098 18H1170Q1184 18 1184 32V76L1141 125H1127L1084 76V32Q1084 18 1098 18Z" fill="#79b72c" />
        <path d="M1134 66V128M1125 67H1143" stroke="#fff" stroke-width="13" stroke-linecap="round" />
      </svg>
    </section>

    <nav class="tabs">
      <button v-for="t in tabs" :key="t.id" type="button" :class="['tab', { active: t.id === activeTab }]" @click="activeTab = t.id">
        <svg width="56" height="48" viewBox="0 0 56 48" fill="none" stroke="#4f4f4f" stroke-width="5" aria-hidden="true">
          <path v-if="t.id === 'home'" d="M3 25.500L28 6.500 53 25.500M11.500 10.500V43.500H44.500V20M33 43V30" />
          <g v-else-if="t.id === 'routes'">
            <circle cx="10" cy="25" r="5" /><circle cx="43" cy="25" r="5" />
            <path d="M10 20V17A8.500 8.500 0 0 1 27 17V34A9 9 0 0 0 45 34V30" />
          </g>
          <g v-else-if="t.id === 'record'"><circle cx="28" cy="25" r="18.500" /><circle cx="28" cy="25" r="9.500" /></g>
          <g v-else-if="t.id === 'profile'" fill="#3f6b0b" stroke="none">
            <circle cx="28" cy="15.500" r="9.500" /><path d="M9 44V41C10 24 46 24 47 41V44Z" />
          </g>
          <g v-else stroke="none">
            <path d="M28 6L43 28H13Z" fill="#858585" /><path d="M28 20L43 43H13Z" fill="#4f4f4f" />
          </g>
        </svg>
        <span>{{ t.label }}</span>
        <b v-if="t.id === 'profile'" class="badge">1</b>
      </button>
    </nav>
    <div class="home-bar"><i></i></div>
  </div>
</template>

<style>
body {
  margin: 0;
  background: #fdfcfa;
}
</style>

<style scoped>
.screen {
  display: flex;
  flex-direction: column;
  min-height: 100vh;
  overflow: hidden;
  background: #fdfcfa;
  color: #000;
  font-family: Inter, 'Liberation Sans', sans-serif;
}
button {
  display: inline-flex;
  align-items: center;
  justify-content: center;
  padding: 0;
  border: 0;
  background: none;
  font: inherit;
  color: inherit;
  cursor: pointer;
}
svg {
  display: block;
}
.status {
  display: flex;
  align-items: center;
  justify-content: space-between;
  height: 60px;
  padding: 40px 42px 18px 57px;
}
.status-left,
.status-right,
.battery-wrap {
  display: flex;
  align-items: center;
}
.status-left {
  gap: 10px;
}
.clock {
  font-size: 38px;
  font-weight: 600;
  font-variant-numeric: tabular-nums;
}
.network {
  margin: 0 12px;
  font-size: 31px;
}
.battery-wrap {
  gap: 1px;
}
.battery {
  width: 60px;
  height: 32px;
  border-radius: 10px;
  background: linear-gradient(90deg, #000 53%, #b3b2b0 53%);
  color: #fff;
  font-size: 29px;
  font-weight: 700;
  line-height: 32px;
  text-align: center;
}
.bar {
  display: grid;
  grid-template-columns: 1fr auto 1fr;
  align-items: center;
  height: 103px;
  padding: 0 22px;
  border-bottom: 1px solid #b8b8b2;
}
.back {
  display: flex;
  align-items: center;
  gap: 22px;
  color: #50880f;
  font-size: 38px;
  text-decoration: none;
}
.back span {
  text-decoration: underline;
  text-decoration-thickness: 3px;
  text-underline-offset: 6px;
}
h1,
h2 {
  margin: 0;
  font-weight: 700;
}
h1 {
  font-size: 38px;
}
.more {
  justify-self: end;
  height: 44px;
  padding: 0 24px;
}
.map {
  position: relative;
  overflow: hidden;
  border-bottom: 3px solid #dedfdc;
}
.canvas {
  width: 100%;
  height: auto;
}
.places {
  font-family: 'Noto Sans', sans-serif;
  font-size: 68px;
  fill: #1c1c1c;
  stroke: #fff;
  stroke-width: 16px;
  stroke-linejoin: round;
  paint-order: stroke;
}
.ref {
  font-family: 'Noto Sans', sans-serif;
  font-size: 60px;
  font-weight: 700;
  fill: #fff;
}
.compass {
  position: absolute;
  top: 21px;
  left: 21px;
  width: 90px;
  height: 90px;
}
.compass svg,
.info svg {
  width: 100%;
}
.info {
  position: absolute;
  bottom: 20px;
  left: 20px;
  width: 54px;
  height: 54px;
  border-radius: 12px;
  background: #7f7f7f33;
}
.controls {
  position: absolute;
  right: 36px;
  bottom: 24px;
  display: flex;
  flex-direction: column;
  width: 103px;
  height: 210px;
  border-radius: 24px;
  background: #fff;
  box-shadow: 0 6px 48px rgb(40 60 10 / 42%);
}
.controls button {
  flex: 1;
}
.controls hr {
  width: 57px;
  height: 2px;
  margin: 0 auto;
  border: 0;
  background: #e2e2e2;
}
.panel {
  background: #fff;
  border-bottom: 1px solid #bdbdbb;
  padding-bottom: 79px;
}
.panel-head {
  display: flex;
  align-items: center;
  justify-content: space-between;
  padding: 16px 35px 0 36px;
}
h2 {
  font-size: 41px;
}
.close {
  width: 57px;
  height: 57px;
  border-radius: 50%;
  background: #d4d4d4;
}
.stats {
  display: flex;
  align-items: center;
  justify-content: space-between;
  height: 60px;
  margin-top: 32px;
  padding: 0 42px 0 37px;
}
.stat {
  display: flex;
  align-items: center;
  gap: 11px;
  color: #50880f;
  font-size: 33px;
  font-weight: 700;
  white-space: nowrap;
}
.more-stats {
  height: 44px;
  margin-left: 10px;
}
.chart {
  width: 100%;
  height: auto;
  margin-top: 6px;
}
.distance,
.altitude {
  font-size: 90px;
}
.altitude {
  fill: #c3c3c3;
  font-variant-numeric: tabular-nums;
}
.tabs {
  display: grid;
  grid-template-columns: repeat(5, 1fr);
  padding: 4px 0;
}
.tab {
  position: relative;
  flex-direction: column;
  justify-content: flex-start;
  gap: 15px;
  height: 107px;
  margin: 0 5px;
  padding-top: 13px;
  border-radius: 12px;
  color: #6b6b6b;
  font-size: 26px;
}
.tab.active {
  background: #dfe6d6;
  color: #50880f;
}
.badge {
  position: absolute;
  top: 3px;
  left: 60%;
  width: 42px;
  height: 42px;
  border-radius: 50%;
  background: #b1261f;
  color: #fff;
  font-size: 31px;
  font-weight: 400;
  line-height: 42px;
}
.home-bar {
  display: flex;
  justify-content: center;
  margin-top: auto;
  padding-bottom: 19px;
}
.home-bar i {
  width: 36%;
  height: 12px;
  border-radius: 6px;
  background: #000;
}
</style>
